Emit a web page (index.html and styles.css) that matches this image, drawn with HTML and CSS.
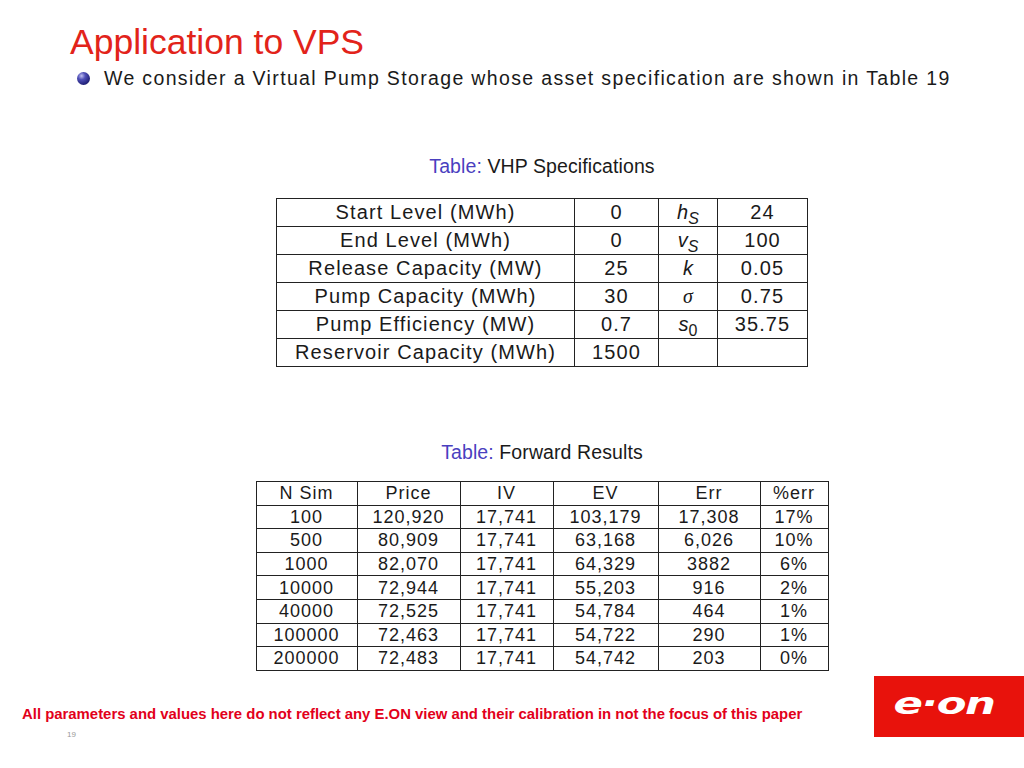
FILE: index.html
```html
<!DOCTYPE html>
<html>
<head>
<meta charset="utf-8">
<link rel="stylesheet" href="styles.css">
</head>
<body>
<div class="slide">
  <h1 class="title">Application to VPS</h1>
  <div class="bullet-row"><span class="ball"></span><span class="bullet-text">We consider a Virtual Pump Storage whose asset specification are shown in Table 19</span></div>

  <div class="content">
    <div class="caption cap1"><span class="cap-label">Table:</span> VHP Specifications</div>
    <table class="spec">
      <tr><td class="c1">Start Level (MWh)</td><td class="c2">0</td><td class="c3"><i>h</i><sub>S</sub></td><td class="c4">24</td></tr>
      <tr><td class="c1">End Level (MWh)</td><td class="c2">0</td><td class="c3"><i>v</i><sub>S</sub></td><td class="c4">100</td></tr>
      <tr><td class="c1">Release Capacity (MW)</td><td class="c2">25</td><td class="c3"><i>k</i></td><td class="c4">0.05</td></tr>
      <tr><td class="c1">Pump Capacity (MWh)</td><td class="c2">30</td><td class="c3"><span class="sigma">σ</span></td><td class="c4">0.75</td></tr>
      <tr><td class="c1">Pump Efficiency (MW)</td><td class="c2">0.7</td><td class="c3"><i>s</i><sub class="up">0</sub></td><td class="c4">35.75</td></tr>
      <tr><td class="c1">Reservoir Capacity (MWh)</td><td class="c2">1500</td><td class="c3"></td><td class="c4"></td></tr>
    </table>

    <div class="caption cap2"><span class="cap-label">Table:</span> Forward Results</div>
    <table class="results">
      <tr><td class="r1">N Sim</td><td class="r2">Price</td><td class="r3">IV</td><td class="r4">EV</td><td class="r5">Err</td><td class="r6">%err</td></tr>
      <tr><td>100</td><td>120,920</td><td>17,741</td><td>103,179</td><td>17,308</td><td>17%</td></tr>
      <tr><td>500</td><td>80,909</td><td>17,741</td><td>63,168</td><td>6,026</td><td>10%</td></tr>
      <tr><td>1000</td><td>82,070</td><td>17,741</td><td>64,329</td><td>3882</td><td>6%</td></tr>
      <tr><td>10000</td><td>72,944</td><td>17,741</td><td>55,203</td><td>916</td><td>2%</td></tr>
      <tr><td>40000</td><td>72,525</td><td>17,741</td><td>54,784</td><td>464</td><td>1%</td></tr>
      <tr><td>100000</td><td>72,463</td><td>17,741</td><td>54,722</td><td>290</td><td>1%</td></tr>
      <tr><td>200000</td><td>72,483</td><td>17,741</td><td>54,742</td><td>203</td><td>0%</td></tr>
    </table>
  </div>

  <div class="footer">
    <div class="footer-left">
      <div class="disclaimer">All parameters and values here do not reflect any E.ON view and their calibration in not the focus of this paper</div>
      <div class="page-num">19</div>
    </div>
    <div class="logo"><span class="logo-text">e·on</span></div>
  </div>
</div>
</body>
</html>
```

FILE: styles.css
```css
html, body {
  margin: 0;
  padding: 0;
  background: #fff;
}

.slide {
  width: 1024px;
  height: 768px;
  display: flex;
  flex-direction: column;
  font-family: "Liberation Sans", Arial, sans-serif;
  color: #1a1a1a;
  overflow: hidden;
}

.title {
  margin: 22px 0 0 70px;
  font-weight: normal;
  font-size: 35.5px;
  line-height: 40px;
  color: #e2231a;
}

.bullet-row {
  display: flex;
  align-items: center;
  margin: 4px 0 0 77px;
  height: 24px;
  line-height: 24px;
}

.ball {
  width: 13px;
  height: 13px;
  border-radius: 50%;
  background: radial-gradient(circle at 35% 30%, #c0c0f0 0%, #5050b8 30%, #22227a 70%, #101048 100%);
  margin-top: 1px;
  margin-right: 14px;
  flex: none;
}

.bullet-text {
  font-size: 19.5px;
  letter-spacing: 1.35px;
  color: #1a1a1a;
  white-space: nowrap;
}

.content {
  display: flex;
  flex-direction: column;
  align-items: center;
  padding-left: 60px;
}

.caption {
  font-size: 19.5px;
  line-height: 22px;
  letter-spacing: 0.1px;
  color: #1a1a1a;
}

.cap-label {
  color: #4a3fbf;
}

.cap1 {
  margin-top: 65px;
  margin-bottom: 21px;
}

.cap2 {
  margin-top: 74px;
  margin-bottom: 18px;
}

table {
  border-collapse: collapse;
}

td {
  border: 1px solid #222;
  padding: 0;
  text-align: center;
  vertical-align: middle;
  white-space: nowrap;
}

.spec td {
  font-size: 20px;
  letter-spacing: 1.1px;
  height: 27px;
  line-height: 27px;
}

.spec .c1 { width: 297px; }
.spec .c2 { width: 83px; }
.spec .c3 { width: 58px; letter-spacing: 0; }
.spec .c4 { width: 89px; }

.spec i {
  font-style: italic;
}

.sigma {
  font-family: "Liberation Serif", "Times New Roman", serif;
  font-style: italic;
  font-size: 20px;
}

.spec sub {
  font-size: 16px;
  line-height: 0;
  vertical-align: -5px;
  font-style: italic;
}

.spec sub.up {
  font-style: normal;
}

.results td {
  font-size: 18px;
  letter-spacing: 1px;
  height: 22.6px;
  line-height: 22px;
}

.results .r1 { width: 100px; }
.results .r2 { width: 102px; }
.results .r3 { width: 92px; }
.results .r4 { width: 104px; }
.results .r5 { width: 101px; }
.results .r6 { width: 67px; }

.footer {
  margin-top: auto;
  margin-bottom: 29px;
  display: flex;
  justify-content: space-between;
  align-items: flex-start;
}

.footer-left {
  padding-top: 30px;
  padding-left: 22px;
}

.disclaimer {
  font-size: 14.9px;
  font-weight: bold;
  color: #e2001a;
  line-height: 16px;
  white-space: nowrap;
}

.page-num {
  font-size: 8px;
  line-height: 9px;
  color: #999;
  margin-left: 45px;
  margin-top: 8px;
}

.logo {
  width: 150px;
  height: 61px;
  background: #e8120c;
  display: flex;
  align-items: center;
  justify-content: center;
}

.logo-text {
  display: inline-block;
  font-family: "DejaVu Sans", sans-serif;
  font-weight: bold;
  font-style: italic;
  font-size: 31px;
  color: #fff;
  letter-spacing: -1px;
  line-height: 1;
  padding-bottom: 6px;
  margin-right: 10px;
  transform: scaleX(1.4);
}
```
